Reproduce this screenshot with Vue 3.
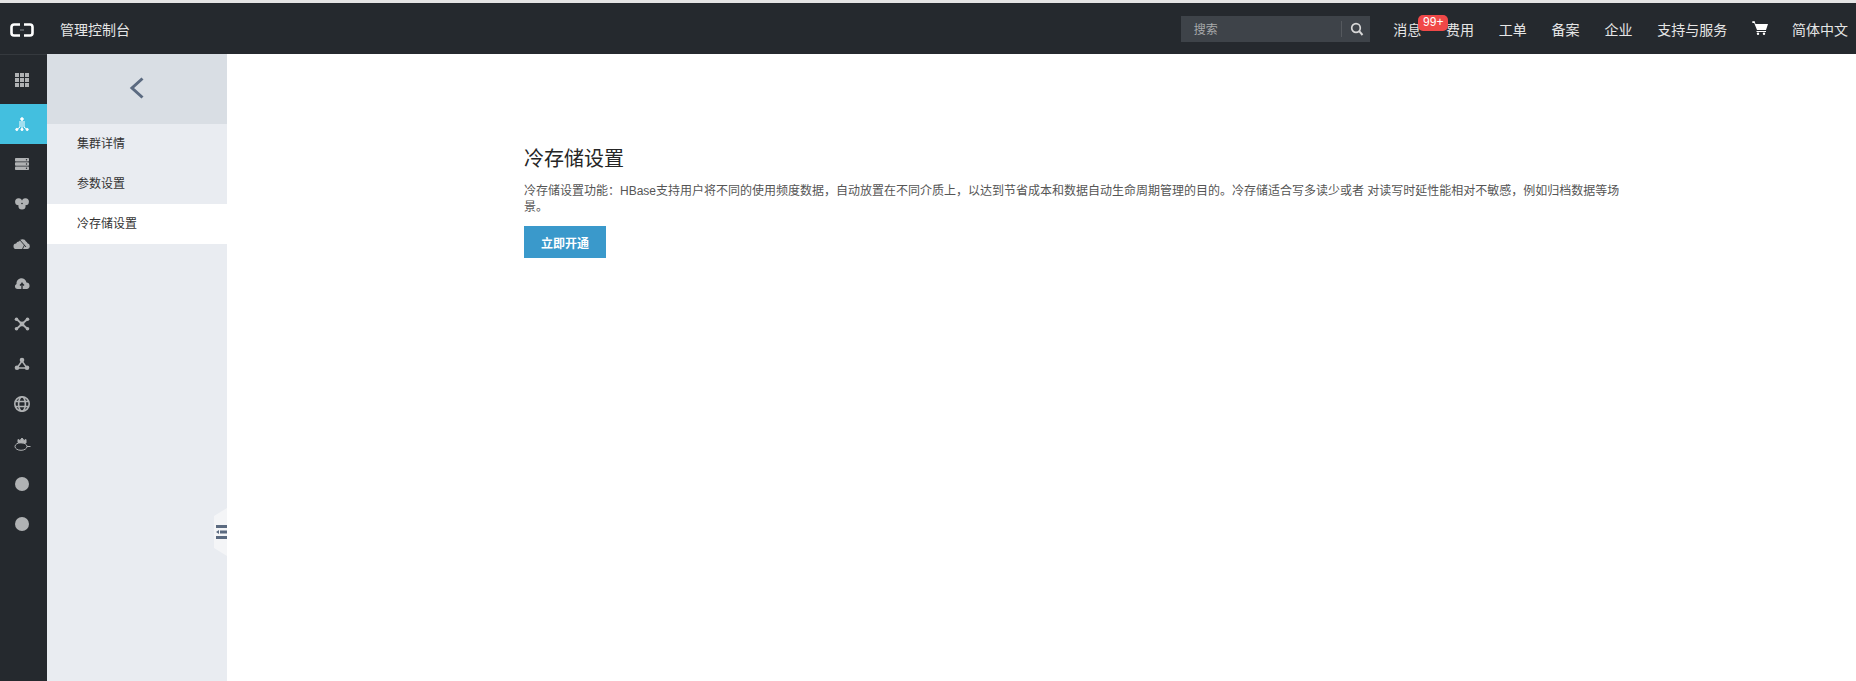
<script setup>
const rail = ['grid','cluster','server','clover','cloud1','cloud2','cross','tri','globe','rat','dot','dot']
const sub = [{t:'集群详情'},{t:'参数设置'},{t:'冷存储设置',active:true}]
const nav = ['费用','工单','备案','企业','支持与服务']
</script>

<template>
  <div class="page">
    <header class="top">
      <div class="logo">
        <svg width="24" height="14" viewBox="0 0 24 14"><path d="M10 1.500H4A2.500 2.500 0 0 0 1.500 4v6A2.500 2.500 0 0 0 4 12.500h6M14 1.500h6A2.500 2.500 0 0 1 22.500 4v6a2.500 2.500 0 0 1-2.500 2.500h-6" fill="none" stroke="#fff" stroke-width="2.600"/><path d="M10 7h4" stroke="#8a8f93" stroke-width="1"/></svg>
      </div>
      <div class="brand">管理控制台</div>
      <div class="right">
        <div class="search">
          <span class="ph">搜索</span>
          <span class="sep"></span>
          <svg class="mag" width="14" height="14" viewBox="0 0 14 14"><circle cx="6" cy="6" r="4.300" fill="none" stroke="#d8d8d8" stroke-width="1.700"/><path d="M9.200 9.200 12.500 13" stroke="#d8d8d8" stroke-width="2"/></svg>
        </div>
        <div class="msg">消息<span class="badge">99+</span></div>
        <a v-for="n in nav" :key="n" class="nv">{{ n }}</a>
        <svg class="cart" width="16" height="14" viewBox="0 0 16 14"><path d="M0 .5 2.500 0l1 3H16l-2 6H5L2.200 2 .5 2z" fill="#fff"/><rect x="4.500" y="10" width="9.500" height="1" fill="#fff"/><circle cx="6" cy="12.800" r="1.200" fill="#fff"/><circle cx="12" cy="12.800" r="1.200" fill="#fff"/></svg>
        <a class="nv lang">简体中文</a>
      </div>
    </header>
    <div class="body">
      <aside class="rail">
        <div v-for="(r,i) in rail" :key="i" class="ri" :class="{on:r==='cluster'}">
          <svg width="18" height="18" viewBox="0 0 18 18">
            <g v-if="r==='grid'" fill="#b0b2b4"><rect v-for="p in [[2,2],[7,2],[12,2],[2,7],[7,7],[12,7],[2,12],[7,12],[12,12]]" :key="p.join()" :x="p[0]" :y="p[1]" width="4" height="4"/></g>
            <g v-else-if="r==='cluster'" fill="none" stroke="#fff" stroke-width="1"><path d="M9 3.500v10.500M7 6v6L4 14.500M11 6v6l3 2.500"/><circle cx="9" cy="4" r="1.300" fill="#fff"/><circle cx="3.800" cy="14.500" r="1.100" fill="#fff"/><circle cx="14.200" cy="14.500" r="1.100" fill="#fff"/><circle cx="9" cy="14.500" r="1.100" fill="#fff"/></g>
            <g v-else-if="r==='server'" fill="#b0b2b4"><rect x="2" y="3" width="14" height="3.500" rx=".8"/><rect x="2" y="7.250" width="14" height="3.500" rx=".8"/><rect x="2" y="11.500" width="14" height="3.500" rx=".8"/><circle cx="13.500" cy="4.750" r=".7" fill="#25292e"/><circle cx="13.500" cy="9" r=".7" fill="#25292e"/><circle cx="13.500" cy="13.250" r=".7" fill="#25292e"/></g>
            <g v-else-if="r==='clover'" fill="#b0b2b4"><circle cx="5.600" cy="6.800" r="3.500"/><circle cx="12.400" cy="6.800" r="3.500"/><circle cx="9" cy="11" r="3.600"/><circle cx="9" cy="8.500" r=".8" fill="#25292e"/></g>
            <g v-else-if="r==='cloud1'" fill="#b0b2b4"><path d="M3.500 14a2.800 2.800 0 0 1-.4-5.600A3 3 0 0 1 6 6.500 3.800 3.800 0 0 1 13 6.500a3 3 0 0 1 1.500 1.800A2.900 2.900 0 0 1 14.500 14z"/><path d="M6.500 4.500 13 12M9.500 14l2-4" stroke="#25292e" stroke-width=".9" fill="none"/></g>
            <g v-else-if="r==='cloud2'" fill="#b0b2b4"><path d="M4.500 14a2.600 2.600 0 0 1-1-5A5 5 0 0 1 13.500 7.500 3.300 3.300 0 0 1 14 14z"/><path d="M9 7.500V14M7 10.500l2-2 2 2" stroke="#25292e" stroke-width="1.300" fill="none"/></g>
            <g v-else-if="r==='cross'" fill="#b0b2b4"><path d="M4 4.500l10 9M14 4.500l-10 9" stroke="#b0b2b4" stroke-width="1.800"/><circle cx="3.500" cy="4.200" r="1.800"/><circle cx="14.500" cy="4.200" r="1.800"/><circle cx="3.500" cy="13.800" r="1.800"/><circle cx="14.500" cy="13.800" r="1.800"/><circle cx="9" cy="9" r="2.400"/></g>
            <g v-else-if="r==='tri'" fill="#b0b2b4"><path d="M9 6 4 13h10z" fill="none" stroke="#b0b2b4" stroke-width="1.500"/><circle cx="9" cy="5" r="2.300"/><circle cx="4" cy="12.800" r="2.300"/><circle cx="14" cy="12.800" r="2.300"/></g>
            <g v-else-if="r==='globe'" fill="none" stroke="#b0b2b4" stroke-width="1.600"><circle cx="9" cy="9" r="7.200"/><ellipse cx="9" cy="9" rx="3.400" ry="7.200"/><path d="M2 6.500h14M2 11.500h14"/></g>
            <g v-else-if="r==='rat'" fill="none" stroke="#b0b2b4" stroke-width="1"><ellipse cx="8" cy="11.500" rx="6" ry="3.800"/><path d="M14 11.500h3.500"/><path d="M5 7.500V4.500l2 1 2-2.500 2 2.500 2-1v3.500z" fill="#b0b2b4"/></g>
            <circle v-else cx="9" cy="9" r="7" fill="#b0b2b4"/>
          </svg>
        </div>
      </aside>
      <aside class="sub">
        <div class="back">
          <svg width="16" height="22" viewBox="0 0 16 22"><path d="M13.500 1.500 3 11l10.500 9.500" fill="none" stroke="#5b6a80" stroke-width="3"/></svg>
        </div>
        <div v-for="s in sub" :key="s.t" class="si" :class="{active:s.active}">{{ s.t }}</div>
        <div class="fold">
          <svg width="12" height="14" viewBox="0 0 12 14"><g fill="#5b6a80"><rect x="0" y="0" width="12" height="3"/><rect x="4" y="5.500" width="8" height="3"/><path d="M0 7 3 5v4z"/><rect x="0" y="11" width="12" height="3"/></g></svg>
        </div>
      </aside>
      <main class="main">
        <h1>冷存储设置</h1>
        <p>冷存储设置功能：HBase支持用户将不同的使用频度数据，自动放置在不同介质上，以达到节省成本和数据自动生命周期管理的目的。冷存储适合写多读少或者 对读写时延性能相对不敏感，例如归档数据等场景。</p>
        <button>立即开通</button>
      </main>
    </div>
  </div>
</template>

<style>
html, body { margin: 0; background: #fff; overflow: hidden; }
</style>
<style scoped>
.page { height: 681px; display: flex; flex-direction: column; padding-top: 3px; box-sizing: border-box; background: #fff; font-family: "Liberation Sans", "Noto Sans CJK SC", sans-serif; position: relative; }
.page::before { content: ""; position: absolute; left: 0; right: 0; top: 0; height: 3px; background: #e4e4e4; }
.top { height: 51px; background: #25292e; display: flex; align-items: center; color: #fff; flex: none; }
.logo { width: 47px; display: flex; justify-content: center; }
.logo svg { margin: 2px 0 0 -3px; }
.brand { margin-left: 13px; font-size: 14px; color: #e6e6e6; }
.right { margin-left: auto; display: flex; align-items: center; height: 100%; font-size: 14px; color: #e6e6e6; }
.search { width: 189px; height: 26px; background: #3e4349; display: flex; align-items: center; margin-right: 23.5px; }
.ph { font-size: 12px; color: #a7a9ab; margin-left: 13px; flex: 1; }
.sep { width: 1px; height: 16px; background: #55595e; }
.mag { margin: 1px 6px 0 8px; }
.msg { position: relative; margin-right: 24.8px; white-space: nowrap; }
.badge { position: absolute; left: 25px; top: -4px; height: 16px; width: 30px; background: #f04848; color: #fff; font-size: 12px; line-height: 15px; text-align: center; border-radius: 5px; }
.nv { margin-right: 24.8px; white-space: nowrap; }
.cart { margin-right: 24px; margin-top: -1px; }
.lang { margin-right: 8px; }
.body { flex: 1; display: flex; min-height: 0; }
.rail { width: 47px; background: #25292e; flex: none; border-top: 1px solid #35393e; box-sizing: border-box; }
.ri { height: 40px; display: flex; align-items: center; justify-content: center; padding-right: 3px; box-sizing: border-box; }
.ri:first-child { height: 49px; }
.ri.on { background: #43bfdf; }
.sub { width: 180px; background: #e9ecf1; flex: none; position: relative; }
.back { height: 70px; background: #d9dee4; display: flex; align-items: center; justify-content: center; padding-bottom: 3px; box-sizing: border-box; }
.si { height: 40px; line-height: 40px; padding-left: 30px; font-size: 12px; color: #333; }
.si.active { background: #fff; }
.fold { position: absolute; right: 0; top: 454px; width: 13px; height: 48px; background: #f4f5f7; clip-path: polygon(0 8px, 100% 0, 100% 100%, 0 40px); display: flex; align-items: center; justify-content: flex-end; }
.fold svg { margin-right: -1px; }
.main { flex: 1; padding: 91px 0 0 297px; box-sizing: border-box; }
h1 { margin: 0; font-size: 20px; font-weight: 400; line-height: 28px; color: #262626; }
p { margin: 10px 0 0; width: 1096px; font-size: 12px; line-height: 16px; color: #555; }
button { display: block; margin-top: 11px; width: 82px; height: 32px; border: 0; padding: 0; background: #3a99cb; color: #fff; font: 700 12px "Liberation Sans", "Noto Sans CJK SC", sans-serif; }
</style>
